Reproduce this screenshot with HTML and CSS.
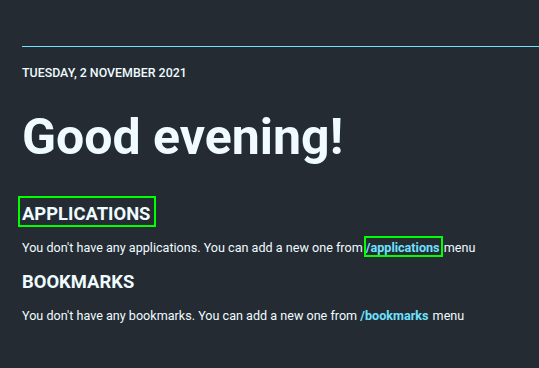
FILE: index.html
```html
<!DOCTYPE html>
<html>
<head>
<meta charset="utf-8">
<link rel="stylesheet" href="styles.css">
</head>
<body>
<div class="container">
  <header class="header">
    <p class="date">Tuesday, 2 November 2021</p>
    <h1 class="greeting">Good evening!</h1>
  </header>
  <section class="section">
    <h2 class="section-title marked">APPLICATIONS</h2>
    <p class="message">You don't have any applications. You can add a new one from <a class="link marked" href="#">/applications</a> menu</p>
  </section>
  <section class="section">
    <h2 class="section-title">BOOKMARKS</h2>
    <p class="message">You don't have any bookmarks. You can add a new one from <a class="link" href="#">/bookmarks</a> menu</p>
  </section>
</div>
</body>
</html>
```
FILE: styles.css
```css
html, body {
  margin: 0;
  padding: 0;
  background: #242b33;
  height: 100%;
}
body {
  font-family: Roboto, "Liberation Sans", sans-serif;
  color: #effbff;
  overflow: hidden;
}
.container {
  padding: 46px 0 0 22px;
}
.header {
  border-top: 1px solid #6ee2ff;
}
.date {
  margin: 18px 0 0 0;
  font-size: 12.4px;
  font-weight: 500;
  text-transform: uppercase;
  line-height: 16px;
}
.greeting {
  margin: 26px 0 0 0;
  font-size: 50px;
  font-weight: 700;
  line-height: 60px;
}
.section {
  margin-top: 31px;
}
.section + .section {
  margin-top: 10px;
}
.section-title {
  display: inline-block;
  margin: 0 0 0 -2px;
  padding: 5px 4px 0 2px;
  font-size: 18.4px;
  font-weight: 700;
  line-height: 22px;
}
.message {
  margin: 15px 0 0 0;
  font-size: 12.6px;
  line-height: 16px;
}
.link {
  color: #6ee2ff;
  font-weight: 700;
  text-decoration: none;
  padding: 2px 1px 0 0;
}
.marked {
  outline: 2px solid #00ff00;
}
```
